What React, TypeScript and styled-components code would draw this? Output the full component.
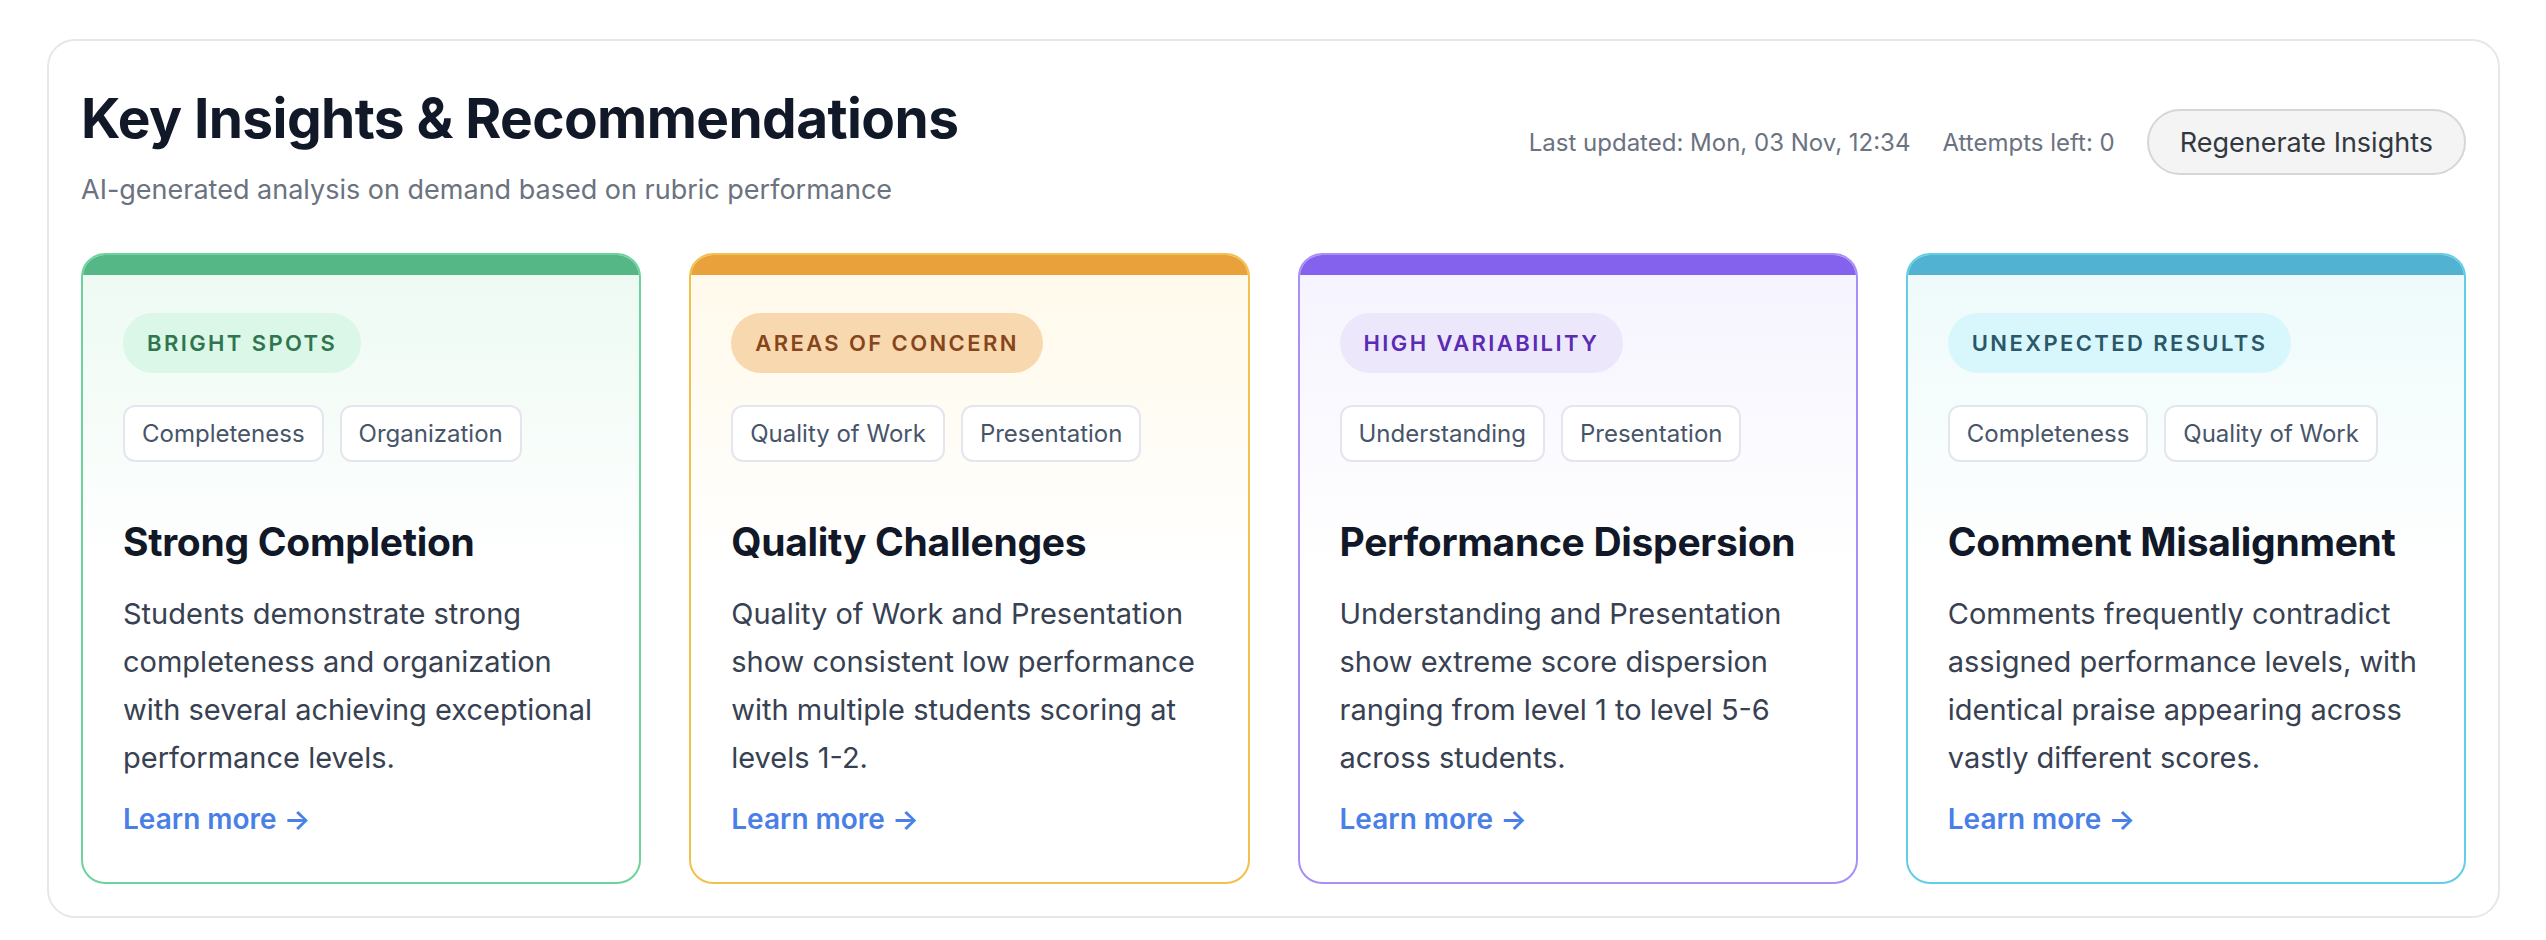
import styled, { createGlobalStyle } from "styled-components";

const GlobalStyle = createGlobalStyle`
  html, body {
    margin: 0;
    padding: 0;
    background: #ffffff;
    font-family: "Inter", "Noto Sans", "Liberation Sans", sans-serif;
    -webkit-font-smoothing: antialiased;
  }
  * {
    box-sizing: border-box;
  }
`;

const Page = styled.div`
  padding: 39px 46px 23px 47px;
`;

const Panel = styled.section`
  border: 2px solid #e6e7eb;
  border-radius: 28px;
  padding: 46px 32px 32px 32px;
  background: #ffffff;
`;

const Header = styled.header`
  display: flex;
  justify-content: space-between;
  align-items: flex-start;
  margin-bottom: 42px;
`;

const TitleBlock = styled.div`
  display: flex;
  flex-direction: column;
`;

const Title = styled.h2`
  margin: 0;
  font-size: 55px;
  line-height: 62px;
  font-weight: 700;
  color: #111827;
  letter-spacing: -0.6px;
`;

const Subtitle = styled.p`
  margin: 20px 0 0 0;
  font-size: 27px;
  line-height: 42px;
  color: #6b7280;
`;

const Actions = styled.div`
  display: flex;
  align-items: center;
  gap: 32px;
  margin-top: 22px;
`;

const Meta = styled.span`
  font-size: 24px;
  color: #6b7280;
`;

const RegenerateButton = styled.button`
  height: 66px;
  padding: 0 31px;
  border: 2px solid #d6d6d9;
  border-radius: 999px;
  background: #f4f4f5;
  color: #333840;
  font-family: inherit;
  font-size: 27px;
  cursor: pointer;
`;

const Grid = styled.div`
  display: grid;
  grid-template-columns: repeat(4, 1fr);
  gap: 48px;
`;

interface Tone {
  border: string;
  bar: string;
  tint: string;
  badgeBg: string;
  badgeText: string;
}

const Card = styled.article<{ $tone: Tone }>`
  display: flex;
  flex-direction: column;
  border: 2px solid ${(p) => p.$tone.border};
  border-radius: 24px;
  overflow: hidden;
  background: linear-gradient(180deg, ${(p) => p.$tone.tint} 0%, #ffffff 50%);
`;

const Bar = styled.div<{ $color: string }>`
  height: 20px;
  background: ${(p) => p.$color};
`;

const CardBody = styled.div`
  display: flex;
  flex-direction: column;
  align-items: flex-start;
  padding: 38px 40px 42px 40px;
`;

const Badge = styled.span<{ $bg: string; $color: string }>`
  display: inline-flex;
  align-items: center;
  height: 60px;
  padding: 0 24px;
  border-radius: 999px;
  background: ${(p) => p.$bg};
  color: ${(p) => p.$color};
  font-size: 22px;
  font-weight: 600;
  letter-spacing: 2.4px;
  text-transform: uppercase;
`;

const ChipRow = styled.div`
  display: flex;
  gap: 16px;
  margin-top: 32px;
  margin-bottom: 56px;
`;

const Chip = styled.span`
  display: inline-flex;
  align-items: center;
  height: 57px;
  padding: 0 17px;
  border: 2px solid #e3e6ee;
  border-radius: 12px;
  background: #ffffff;
  color: #475569;
  font-size: 24px;
`;

const CardTitle = styled.h3`
  margin: 0;
  font-size: 39px;
  line-height: 48px;
  font-weight: 700;
  color: #111827;
  letter-spacing: -0.3px;
`;

const Description = styled.p`
  margin: 24px 0 0 0;
  font-size: 29px;
  line-height: 48px;
  color: #374151;
`;

const LearnMore = styled.a`
  margin-top: 16px;
  font-size: 28px;
  line-height: 42px;
  font-weight: 600;
  color: #4a7fe8;
  text-decoration: none;
  cursor: pointer;
`;

interface Insight {
  label: string;
  chips: string[];
  title: string;
  text: string;
  tone: Tone;
}

const insights: Insight[] = [
  {
    label: "Bright Spots",
    chips: ["Completeness", "Organization"],
    title: "Strong Completion",
    text: "Students demonstrate strong completeness and organization with several achieving exceptional performance levels.",
    tone: {
      border: "#6dd39c",
      bar: "#55b785",
      tint: "#ecfaf2",
      badgeBg: "#dbf7e7",
      badgeText: "#2f7650",
    },
  },
  {
    label: "Areas of Concern",
    chips: ["Quality of Work", "Presentation"],
    title: "Quality Challenges",
    text: "Quality of Work and Presentation show consistent low performance with multiple students scoring at levels 1-2.",
    tone: {
      border: "#f2c04c",
      bar: "#e9a23b",
      tint: "#fff9e9",
      badgeBg: "#f8d9af",
      badgeText: "#87451c",
    },
  },
  {
    label: "High Variability",
    chips: ["Understanding", "Presentation"],
    title: "Performance Dispersion",
    text: "Understanding and Presentation show extreme score dispersion ranging from level 1 to level 5-6 across students.",
    tone: {
      border: "#a88ff6",
      bar: "#8562ee",
      tint: "#f5f3fe",
      badgeBg: "#ece7fb",
      badgeText: "#5b2bb3",
    },
  },
  {
    label: "Unexpected Results",
    chips: ["Completeness", "Quality of Work"],
    title: "Comment Misalignment",
    text: "Comments frequently contradict assigned performance levels, with identical praise appearing across vastly different scores.",
    tone: {
      border: "#62cde5",
      bar: "#52b2d2",
      tint: "#edfafa",
      badgeBg: "#d8f7fc",
      badgeText: "#2b5769",
    },
  },
];

const App = () => {
  return (
    <Page>
      <GlobalStyle />
      <Panel>
        <Header>
          <TitleBlock>
            <Title>Key Insights &amp; Recommendations</Title>
            <Subtitle>
              AI-generated analysis on demand based on rubric performance
            </Subtitle>
          </TitleBlock>
          <Actions>
            <Meta>Last updated: Mon, 03 Nov, 12:34</Meta>
            <Meta>Attempts left: 0</Meta>
            <RegenerateButton type="button">Regenerate Insights</RegenerateButton>
          </Actions>
        </Header>
        <Grid>
          {insights.map((item) => (
            <Card key={item.title} $tone={item.tone}>
              <Bar $color={item.tone.bar} />
              <CardBody>
                <Badge $bg={item.tone.badgeBg} $color={item.tone.badgeText}>
                  {item.label}
                </Badge>
                <ChipRow>
                  {item.chips.map((chip) => (
                    <Chip key={chip}>{chip}</Chip>
                  ))}
                </ChipRow>
                <CardTitle>{item.title}</CardTitle>
                <Description>{item.text}</Description>
                <LearnMore>Learn more →</LearnMore>
              </CardBody>
            </Card>
          ))}
        </Grid>
      </Panel>
    </Page>
  );
};

export default App;
